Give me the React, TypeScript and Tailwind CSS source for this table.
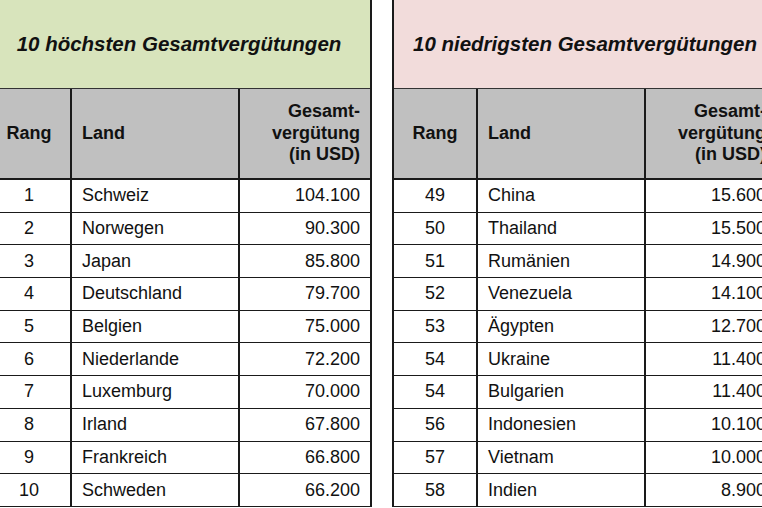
type Row = { rank: string; land: string; value: string };

const top: Row[] = [
  { rank: '1', land: 'Schweiz', value: '104.100' },
  { rank: '2', land: 'Norwegen', value: '90.300' },
  { rank: '3', land: 'Japan', value: '85.800' },
  { rank: '4', land: 'Deutschland', value: '79.700' },
  { rank: '5', land: 'Belgien', value: '75.000' },
  { rank: '6', land: 'Niederlande', value: '72.200' },
  { rank: '7', land: 'Luxemburg', value: '70.000' },
  { rank: '8', land: 'Irland', value: '67.800' },
  { rank: '9', land: 'Frankreich', value: '66.800' },
  { rank: '10', land: 'Schweden', value: '66.200' },
];

const bottom: Row[] = [
  { rank: '49', land: 'China', value: '15.600' },
  { rank: '50', land: 'Thailand', value: '15.500' },
  { rank: '51', land: 'Rumänien', value: '14.900' },
  { rank: '52', land: 'Venezuela', value: '14.100' },
  { rank: '53', land: 'Ägypten', value: '12.700' },
  { rank: '54', land: 'Ukraine', value: '11.400' },
  { rank: '54', land: 'Bulgarien', value: '11.400' },
  { rank: '56', land: 'Indonesien', value: '10.100' },
  { rank: '57', land: 'Vietnam', value: '10.000' },
  { rank: '58', land: 'Indien', value: '8.900' },
];

function RankTable({ title, titleBg, rows }: { title: string; titleBg: string; rows: Row[] }) {
  return (
    <div className="w-[386px] shrink-0 border-x-2 border-[#1a1a1a]">
      <div
        className={`h-[89px] flex items-center justify-center border-b border-[#333] text-[20.5px] font-bold italic text-[#111] ${titleBg}`}
      >
        {title}
      </div>
      <div className="flex h-[91px] border-b-2 border-[#1a1a1a] bg-[#c0c0c0] text-[18px] font-bold text-[#111]">
        <div className="w-[82px] flex items-center justify-center">Rang</div>
        <div className="w-[168px] flex items-center pl-[10px] border-l-2 border-[#1a1a1a]">Land</div>
        <div className="flex-1 flex flex-col justify-center items-end pr-[10px] border-l-2 border-[#1a1a1a] text-right leading-[21.5px]">
          <span>Gesamt-</span>
          <span>vergütung</span>
          <span>(in USD)</span>
        </div>
      </div>
      {rows.map((r, i) => (
        <div key={i} className="flex h-[32.7px] border-b border-[#1a1a1a] text-[18px] text-[#111]">
          <div className="w-[82px] flex items-center justify-center">{r.rank}</div>
          <div className="w-[168px] flex items-center pl-[10px] border-l-2 border-[#1a1a1a]">{r.land}</div>
          <div className="flex-1 flex items-center justify-end pr-[10px] border-l-2 border-[#1a1a1a]">{r.value}</div>
        </div>
      ))}
    </div>
  );
}

export default function App() {
  return (
    <div className="w-[762px] h-[508px] overflow-hidden bg-white font-['Liberation_Sans',Arial,sans-serif]">
      <div className="flex gap-[20px] ml-[-14px]">
        <RankTable title="10 höchsten Gesamtvergütungen" titleBg="bg-[#d8e4bc]" rows={top} />
        <RankTable title="10 niedrigsten Gesamtvergütungen" titleBg="bg-[#f2dcdb]" rows={bottom} />
      </div>
    </div>
  );
}
